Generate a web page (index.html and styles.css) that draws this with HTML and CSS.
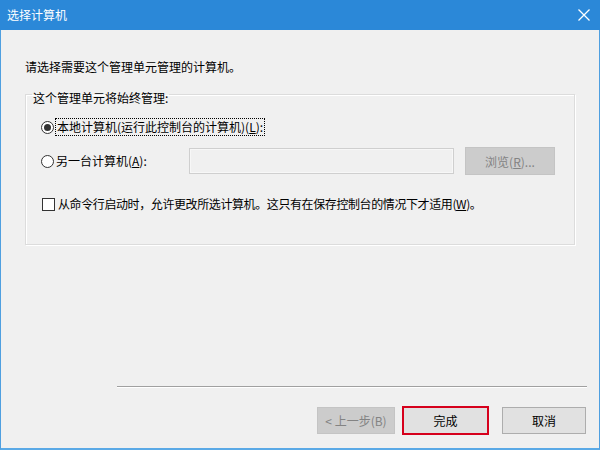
FILE: index.html
```html
<!DOCTYPE html>
<html lang="zh-CN">
<head>
<meta charset="utf-8">
<title>选择计算机</title>
<link rel="stylesheet" href="styles.css">
</head>
<body>
<div class="window">
  <div class="titlebar">
    <span class="title">选择计算机</span>
    <svg class="close" width="14" height="14" viewBox="0 0 14 14"><path d="M1.5 1.5 L12.5 12.5 M12.5 1.5 L1.5 12.5" stroke="#fff" stroke-width="1.3" fill="none"/></svg>
  </div>
  <div class="content">
    <p class="intro">请选择需要这个管理单元管理的计算机。</p>
    <fieldset class="group">
      <legend class="legend">这个管理单元将始终管理:</legend>
      <div class="row row-local">
        <span class="radio checked"></span>
        <span class="label focus">本地计算机(运行此控制台的计算机)(<u>L</u>):</span>
      </div>
      <div class="row row-other">
        <span class="radio"></span>
        <span class="label other-label">另一台计算机(<u>A</u>):</span>
        <span class="input"></span>
        <span class="btn disabled browse">浏览(<u>R</u>)...</span>
      </div>
      <div class="row row-check">
        <span class="checkbox"></span>
        <span class="label check-label">从命令行启动时，允许更改所选计算机。这只有在保存控制台的情况下才适用(<u>W</u>)。</span>
      </div>
    </fieldset>
  </div>
  <div class="footer">
    <div class="separator"></div>
    <div class="buttons">
      <span class="btn disabled back">&lt; 上一步(B)</span>
      <span class="btn finish">完成</span>
      <span class="btn cancel">取消</span>
    </div>
  </div>
</div>
</body>
</html>
```

FILE: styles.css
```css
* { box-sizing: border-box; }
html, body { margin: 0; padding: 0; }
body {
  width: 600px;
  height: 450px;
  overflow: hidden;
  font-family: "Noto Sans CJK SC", "Noto Sans", sans-serif;
  font-size: 12px;
  color: #000;
  background: #f0f0f0;
}
.window {
  width: 600px;
  height: 450px;
  display: flex;
  flex-direction: column;
  background: #f0f0f0;
  border-left: 1px solid #4f9fe0;
  border-right: 1px solid #4f9fe0;
  border-bottom: 2px solid #5aa9e6;
}
.titlebar {
  height: 30px;
  flex: none;
  background: #2b88d8;
  display: flex;
  align-items: center;
  justify-content: space-between;
  padding: 0 9px 0 7px;
  margin: 0 -1px;
  color: #fff;
}
.title { font-size: 12px; line-height: 16px; }
.close { display: block; }
.content {
  flex: 1;
  padding: 29px 24px 0 24px;
  display: flex;
  flex-direction: column;
}
.intro {
  margin: 0;
  line-height: 16px;
}
.group {
  margin: 7px 0 0 0;
  padding: 12px 0 31px 0;
  border: 1px solid #dcdcdc;
  box-shadow: inset 1px 1px 0 #fff, 1px 1px 0 #fff;
  min-width: 0;
}
.legend {
  margin-left: 6px;
  padding: 8px 1px 0 1px;
  line-height: 16px;
}
.row {
  display: flex;
  align-items: center;
  padding-left: 15px;
}
.row-local { height: 18px; }
.row-other { height: 28px; margin-top: 11px; }
.row-check { height: 18px; margin-top: 20px; padding-left: 16px; }
.label { line-height: 16px; white-space: nowrap; }
.focus {
  margin-left: 1px;
  padding: 0 1px;
  outline: 1px dotted #000;
  outline-offset: 0;
}
.radio {
  width: 13px;
  height: 13px;
  flex: none;
  border: 1px solid #333;
  border-radius: 50%;
  background: #fff;
  margin-right: 1px;
  display: flex;
  align-items: center;
  justify-content: center;
}
.radio.checked::after {
  content: "";
  width: 7px;
  height: 7px;
  border-radius: 50%;
  background: #333;
}
.other-label {
  width: 133px;
  margin-left: 1px;
}
.input {
  width: 265px;
  height: 26px;
  border: 1px solid #cfcfcf;
  background: #f0f0f0;
  box-shadow: inset 0 0 0 1px #f7f7f7;
}
.checkbox {
  width: 13px;
  height: 13px;
  flex: none;
  border: 1px solid #333;
  background: #fff;
  margin-right: 3px;
}
.check-label { letter-spacing: -0.4px; }
.btn {
  display: flex;
  align-items: center;
  justify-content: center;
  height: 27px;
  border: 1px solid #adadad;
  background: #e1e1e1;
  white-space: nowrap;
}
.btn.disabled {
  background: #cccccc;
  border-color: #c4c4c4;
  color: #838383;
}
.browse {
  width: 90px;
  height: 28px;
  margin-left: 11px;
}
.footer {
  flex: none;
  padding: 0 12px 13px 116px;
}
.separator {
  height: 2px;
  border-top: 1px solid #a0a0a0;
  border-bottom: 1px solid #fff;
}
.buttons {
  display: flex;
  align-items: center;
  justify-content: flex-end;
  margin-top: 18px;
  margin-right: 1px;
  height: 29px;
}
.back { width: 78px; }
.finish {
  width: 87px;
  height: 29px;
  margin-left: 7px;
  border: 2px solid #d6001c;
}
.cancel {
  width: 84px;
  margin-left: 13px;
}
```
